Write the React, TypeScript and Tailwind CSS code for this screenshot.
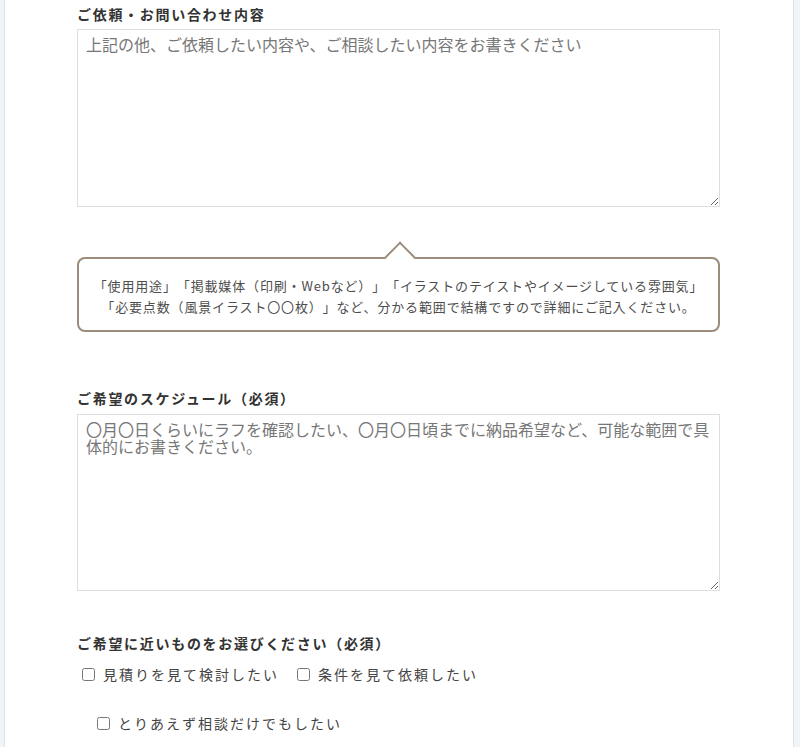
import React from 'react';

const jp = { fontFamily: '"Noto Sans CJK JP", "Noto Sans", sans-serif' };

function Label({ children }: { children: React.ReactNode }) {
  return (
    <div className="text-[14px] leading-[20px] font-bold tracking-[1.7px] text-[#333]">
      {children}
    </div>
  );
}

function Check({ label }: { label: string }) {
  return (
    <label className="inline-flex items-center gap-[8px] text-[14px] tracking-[2px] text-[#444]">
      <input type="checkbox" className="w-[13px] h-[13px] m-0 accent-[#555]" />
      <span>{label}</span>
    </label>
  );
}

export default function App() {
  return (
    <div className="min-h-[747px] w-[800px] bg-[#f1f4f7] pl-[4px] pr-[6px] [text-spacing-trim:space-all]" style={jp}>
      <div className="min-h-[747px] bg-white border-x border-[#dbe4ee] pl-[72px] pr-[73px] pt-[4px]">
        <Label>ご依頼・お問い合わせ内容</Label>
        <textarea
          className="mt-[5px] block w-full h-[178px] border border-[#dedede] px-[8px] pt-[6px] text-[16px] leading-[17px] text-[#333] placeholder:text-[#777] outline-none [text-spacing-trim:space-all]"
          placeholder="上記の他、ご依頼したい内容や、ご相談したい内容をお書きください"
        />

        <div className="relative mt-[50px] h-[75px] border-2 border-[#9b8c7b] rounded-[8px] bg-white flex flex-col items-center justify-center text-[13px] leading-[21px] tracking-[0.85px] text-[#4d4d4d]">
          <div className="absolute left-[310px] top-[-13px] w-[22px] h-[22px] rotate-45 bg-white border-t-2 border-l-2 border-[#9b8c7b]" />
          <div className="relative whitespace-nowrap mt-[2px]">「使用用途」「掲載媒体（印刷・Webなど）」「イラストのテイストやイメージしている雰囲気」</div>
          <div className="relative whitespace-nowrap">「必要点数（風景イラスト〇〇枚）」など、分かる範囲で結構ですので詳細にご記入ください。</div>
        </div>

        <div className="mt-[56px]">
          <Label>ご希望のスケジュール（必須）</Label>
        </div>
        <textarea
          className="mt-[6px] block w-full h-[177px] border border-[#dedede] px-[8px] pt-[6px] text-[16px] leading-[17px] text-[#333] placeholder:text-[#777] outline-none [text-spacing-trim:space-all]"
          placeholder="〇月〇日くらいにラフを確認したい、〇月〇日頃までに納品希望など、可能な範囲で具体的にお書きください。"
        />

        <div className="mt-[42px]">
          <Label>ご希望に近いものをお選びください（必須）</Label>
        </div>
        <div className="mt-[11px] flex items-center gap-[18px] pl-[5px]">
          <Check label="見積りを見て検討したい" />
          <Check label="条件を見て依頼したい" />
        </div>
        <div className="mt-[28px] flex items-center pl-[20px]">
          <Check label="とりあえず相談だけでもしたい" />
        </div>
      </div>
    </div>
  );
}
